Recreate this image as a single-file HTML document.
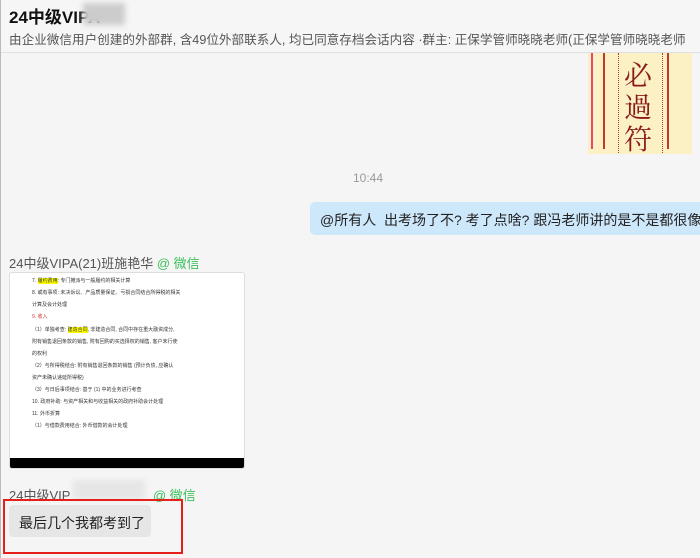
<html><head><style>
body{margin:0;width:700px;height:558px;background:#f5f5f5;font-family:"Liberation Sans","Noto Sans CJK SC",sans-serif;position:relative;overflow:hidden;border-left:1px solid #bbb;box-sizing:border-box}
.a{position:absolute;white-space:nowrap}
.doc div{position:absolute;left:22px;font-size:5px;color:#333;white-space:nowrap}
</style></head><body>
<div class="a" style="left:0;top:0;width:700px;height:52px;border-bottom:1px solid #e0e0e0;background:#f6f6f6"></div>
<div class="a" style="left:8px;top:3px;font-size:17px;font-weight:bold;color:#111">24中级VIPA</div>
<div class="a" style="left:82px;top:3px;width:42px;height:22px;background:#ccc;filter:blur(3px)"></div>
<div class="a" style="left:8px;top:29px;font-size:12.6px;color:#555">由企业微信用户创建的外部群, 含49位外部联系人, 均已同意存档会话内容 ·群主: 正保学管师晓晓老师(正保学管师晓晓老师</div>
<div class="a" style="left:587px;top:53px;width:104px;height:101px;background:#fbf1c5"></div>
<div class="a" style="left:590px;top:53px;width:10px;height:96px;border-right:2px solid #c0392b;border-left:2px solid #e47"></div>
<div class="a" style="left:666px;top:53px;width:8px;height:96px;border-left:2px solid #c0392b"></div>
<div class="a" style="left:617px;top:53px;height:100px;border-left:1px dotted #c33"></div>
<div class="a" style="left:661px;top:53px;height:100px;border-left:1px dotted #c33"></div>
<div class="a" style="left:623px;top:58px;font-size:28px;line-height:32px;color:#8b1a1a;font-family:'Noto Serif CJK SC',serif;width:30px">必<br>過<br>符</div>
<div class="a" style="left:352px;top:171px;font-size:12px;color:#999">10:44</div>
<div class="a" style="left:309px;top:202px;width:400px;height:33px;background:#cde7fb;border-radius:5px"></div>
<div class="a" style="left:319px;top:210px;font-size:14px;color:#222">@所有人&nbsp; 出考场了不? 考了点啥? 跟冯老师讲的是不是都很像</div>
<div class="a" style="left:8px;top:253px;font-size:13px;color:#555">24中级VIPA(21)班施艳华 <span style="color:#3cbf5c">@ 微信</span></div>
<div class="a doc" style="left:8px;top:272px;width:234px;height:195px;background:#fff;border:1px solid #ddd;border-radius:3px;overflow:hidden">
<div style="top:4px">7. <span style="background:#ff0">履约费用</span>: 专门摊派与一般履约的相关计算</div>
<div style="top:16px">8. 或有事项: 未决诉讼、产品质量保证、亏损合同结合所得税的相关</div>
<div style="top:28px">计算及会计处理</div>
<div style="top:40px;color:#c33">9. 收入</div>
<div style="top:53px">（1）单独考查: <span style="background:#ff0">建造合同</span>, 非建造合同, 合同中存在重大融资成分,</div>
<div style="top:65px">附有销售退回条款的销售, 附有回购的买选择权的销售, 客户未行使</div>
<div style="top:77px">的权利</div>
<div style="top:89px">（2）与所得税结合: 附有销售退回条款的销售 (预计负债, 应确认</div>
<div style="top:101px">资产未确认递延所得税)</div>
<div style="top:113px">（3）与日后事项结合: 基于 (1) 中的业务进行考查</div>
<div style="top:125px">10. 政府补助: 与资产相关和与收益相关的政府补助会计处理</div>
<div style="top:137px">11. 外币折算</div>
<div style="top:149px">（1）与借款费用结合: 外币借款的会计处理</div>
<div style="top:185px;left:0;width:234px;height:10px;background:#000"></div>
</div>
<div class="a" style="left:8px;top:485px;font-size:13px;color:#555">24中级VIP</div>
<div class="a" style="left:72px;top:480px;width:72px;height:20px;background:#e6e6e6;filter:blur(3px)"></div>
<div class="a" style="left:152px;top:485px;font-size:13px;color:#3cbf5c">@ 微信</div>
<div class="a" style="left:8px;top:505px;width:142px;height:32px;background:#e6e6e6;border-radius:4px"></div>
<div class="a" style="left:18px;top:513px;font-size:14px;color:#222">最后几个我都考到了</div>
<div class="a" style="left:2px;top:499px;width:176px;height:51px;border:2px solid #e5201b"></div>
</body></html>
